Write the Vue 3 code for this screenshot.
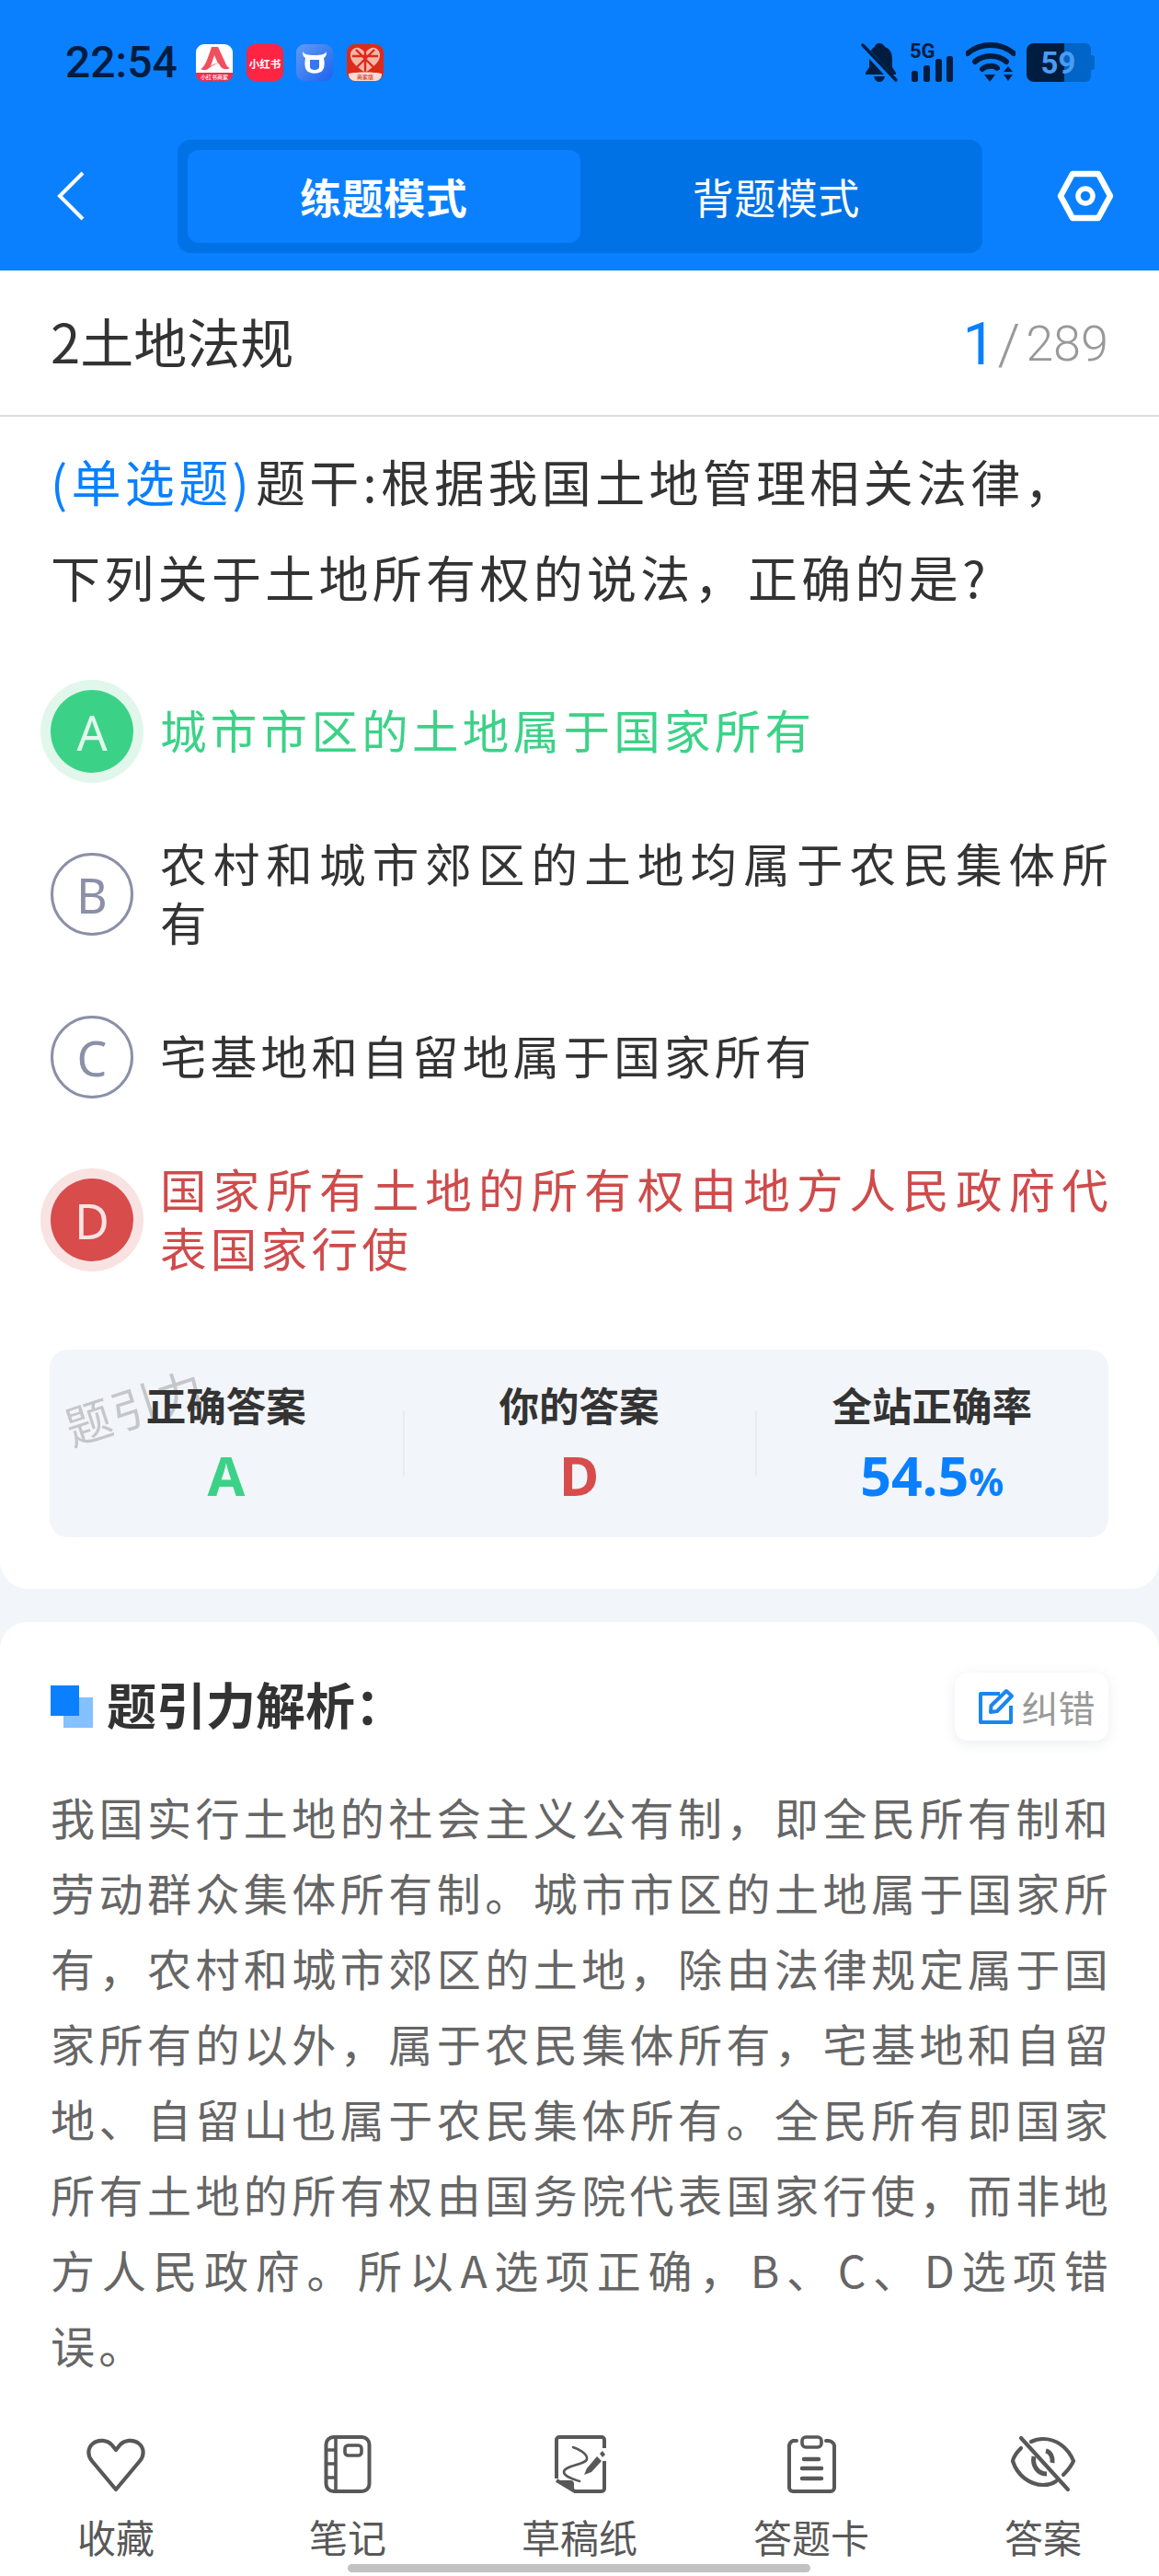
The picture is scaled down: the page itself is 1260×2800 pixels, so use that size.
<script setup>
const options = [
  { key: 'A', text: '城市市区的土地属于国家所有', state: 'right' },
  { key: 'B', text: '农村和城市郊区的土地均属于农民集体所有', state: '' },
  { key: 'C', text: '宅基地和自留地属于国家所有', state: '' },
  { key: 'D', text: '国家所有土地的所有权由地方人民政府代表国家行使', state: 'wrong' }
]
const analysis = '我国实行土地的社会主义公有制，即全民所有制和劳动群众集体所有制。城市市区的土地属于国家所有，农村和城市郊区的土地，除由法律规定属于国家所有的以外，属于农民集体所有，宅基地和自留地、自留山也属于农民集体所有。全民所有即国家所有土地的所有权由国务院代表国家行使，而非地方人民政府。所以A选项正确，B、C、D选项错误。'
</script>

<template>
  <div class="page">
    <header class="top">
      <div class="status">
        <span class="time">22:54</span>
        <div class="apps">
          <svg class="app" viewBox="0 0 40 40">
            <rect width="40" height="40" rx="9" fill="#fff" />
            <path d="M0 31H40V33A7 7 0 0 1 33 40H7A7 7 0 0 1 0 33Z" fill="#e8304e" />
            <path d="M5 27C10 25 13 15 17 3H24L31 18C33 23 34 25 37 26C31 29 27 26 25 21C21 21 17 24 13 27C10 29 7 28 5 27Z" fill="#f0505c" />
            <path d="M20 12L24 21C21 21 18 22 16 24Z" fill="#fff" />
            <text x="20" y="38" class="app-tiny" fill="#fff">小红书商家</text>
          </svg>
          <svg class="app" viewBox="0 0 40 40">
            <rect width="40" height="40" rx="9" fill="#ff2442" />
            <text x="20" y="25.500" class="app-red" fill="#fff">小红书</text>
          </svg>
          <svg class="app" viewBox="0 0 40 40">
            <defs>
              <linearGradient id="cowBg" x1="0" y1="0" x2="1" y2="1">
                <stop offset="0" stop-color="#5f9cf5" />
                <stop offset="1" stop-color="#1f62ee" />
              </linearGradient>
            </defs>
            <rect width="40" height="40" rx="9" fill="url(#cowBg)" />
            <path d="M7 8C7 12 8 14 10 15C9 20 9 25 11 28C14 33 26 33 29 28C31 25 31 20 30 15C32 14 33 12 33 8C31 11 28 12 20 12C12 12 9 11 7 8Z" fill="#fff" />
            <path d="M15 17H25V25C25 29 15 29 15 25Z" fill="#3478f0" />
          </svg>
          <svg class="app" viewBox="0 0 40 40">
            <rect width="40" height="40" rx="9" fill="#dd2a1a" />
            <path d="M20 31C10 24 4 19 4 12C4 6 9 3 13 4C16 5 18 7 20 9C22 7 24 5 27 4C31 3 36 6 36 12C36 19 30 24 20 31Z" fill="#f5b7a8" />
            <path d="M20 5V30M6 13H34M10 6L30 26M30 6L10 26" stroke="#dd2a1a" stroke-width="2.400" fill="none" />
            <path d="M2 32C10 30 30 30 38 32V33A7 7 0 0 1 31 40H9A7 7 0 0 1 2 33Z" fill="#fbdcd3" />
            <text x="20" y="38.400" class="app-tiny" fill="#d63a2a">商家版</text>
          </svg>
        </div>
        <div class="indicators">
          <svg class="ind bell" viewBox="0 0 40 44">
            <path d="M20 1C23 1 25 3 26 5C32 7 34 12 34 19V27L38 33V35H5V33L9 27V14L10 10C12 7 14 5 15 5C15 3 17 1 20 1Z" fill="#001c3f" />
            <path d="M14 37H26C25 41 23 43 20 43C17 43 15 41 14 37Z" fill="#001c3f" />
            <path d="M0 3L38 44" stroke="#0a80ff" stroke-width="7" />
            <path d="M2 3L38 41" stroke="#001c3f" stroke-width="3.400" stroke-linecap="round" />
          </svg>
          <svg class="ind signal" viewBox="0 -6 50 50">
            <text x="1" y="17" class="five-g" fill="#001c3f">5G</text>
            <rect x="3" y="31" width="7" height="12" rx="2.500" fill="#001c3f" />
            <rect x="16" y="25" width="7" height="18" rx="2.500" fill="#001c3f" />
            <rect x="29" y="18" width="7" height="25" rx="2.500" fill="#001c3f" />
            <rect x="41" y="15" width="7" height="28" rx="2.500" fill="#001c3f" />
          </svg>
          <svg class="ind wifi" viewBox="0 0 54 44">
            <path d="M2 12C16 0 38 0 52 12" fill="none" stroke="#001c3f" stroke-width="6" stroke-linecap="round" />
            <path d="M10 21C19 13 35 13 44 21" fill="none" stroke="#001c3f" stroke-width="6" stroke-linecap="round" />
            <path d="M18 29C22 25 31 25 34 28" fill="none" stroke="#001c3f" stroke-width="6" stroke-linecap="round" />
            <path d="M20 35H32L26 43Z" fill="#001c3f" />
            <path d="M41 32H51L46 26Z M41 35H51L46 42Z" fill="#001c3f" />
          </svg>
          <svg class="ind battery" viewBox="0 0 74 42">
            <path d="M41 0H64A6 6 0 0 1 70 6V36A6 6 0 0 1 64 42H41Z" fill="#0065c6" />
            <path d="M70 13H71A3 3 0 0 1 74 16V26A3 3 0 0 1 71 29H70Z" fill="#0065c6" />
            <path d="M41 0H8A8 8 0 0 0 0 8V34A8 8 0 0 0 8 42H41Z" fill="#001c3f" />
            <text x="15.500" y="33" class="batt" fill="#4a9cf2">59</text>
          </svg>
        </div>
      </div>

      <nav class="nav">
        <svg class="back" viewBox="0 0 30 54">
          <path d="M28 2L3 27L28 52" fill="none" stroke="#fff" stroke-width="4" />
        </svg>
        <div class="tabs">
          <span class="tab on">练题模式</span>
          <span class="tab">背题模式</span>
        </div>
        <svg class="gear" viewBox="0 0 62 56">
          <path d="M17 4H45L58 28L45 52H17L4 28Z" fill="none" stroke="#fff" stroke-width="6.500" stroke-linejoin="round" />
          <circle cx="31" cy="28" r="8" fill="none" stroke="#fff" stroke-width="5.500" />
        </svg>
      </nav>
    </header>

    <main class="body">
      <section class="card first">
        <div class="head">
          <span class="chapter">2土地法规</span>
          <span class="count"><b>1</b><i>/</i>289</span>
        </div>
        <div class="question"><span class="qtype">(单选题)</span>题干:根据我国土地管理相关法律，下列关于土地所有权的说法，正确的是?</div>
        <ul class="options">
          <li v-for="o in options" :key="o.key" class="option" :class="o.state">
            <span class="mark">{{ o.key }}</span>
            <span class="otext">{{ o.text }}</span>
          </li>
        </ul>
        <div class="stats">
          <span class="watermark">题引力</span>
          <div class="stat">
            <span class="slabel">正确答案</span>
            <span class="sval green">A</span>
          </div>
          <div class="stat">
            <span class="slabel">你的答案</span>
            <span class="sval red">D</span>
          </div>
          <div class="stat">
            <span class="slabel">全站正确率</span>
            <span class="sval blue">54.5<small>%</small></span>
          </div>
        </div>
      </section>

      <section class="card second">
        <div class="ahead">
          <span class="squares"><i class="s2"></i><i class="s1"></i></span>
          <h2 class="atitle">题引力解析：</h2>
          <span class="fix">
            <svg class="fix-ico" viewBox="0 0 40 40">
              <path d="M24 6H3V37H36V19" fill="none" stroke="#1a86ee" stroke-width="4" stroke-linejoin="round" />
              <path d="M14 26L14.500 19L31 3L37 8.500L21 25Z" fill="none" stroke="#1a86ee" stroke-width="4" stroke-linejoin="round" />
            </svg>
            纠错
          </span>
        </div>
        <p class="analysis">{{ analysis }}</p>
      </section>
    </main>

    <footer class="tools">
      <div class="tool">
        <svg class="tico" viewBox="0 0 72 64">
          <path d="M36 59L10 28C5 22 5 14 11 9C17 4 27 5 32 11L36 16L40 11C45 5 55 4 61 9C67 14 67 22 62 28Z" fill="none" stroke="#585858" stroke-width="4.200" stroke-linejoin="round" />
        </svg>
        <span>收藏</span>
      </div>
      <div class="tool">
        <svg class="tico" viewBox="0 0 72 64">
          <rect x="12.500" y="2" width="47" height="59" rx="8" fill="none" stroke="#585858" stroke-width="4" />
          <path d="M23 2V61M12 16H23M12 31H23M12 46H23" fill="none" stroke="#585858" stroke-width="3.600" />
          <rect x="33" y="11" width="18" height="11" rx="3.500" fill="none" stroke="#585858" stroke-width="3.600" />
        </svg>
        <span>笔记</span>
      </div>
      <div class="tool">
        <svg class="tico" viewBox="0 0 72 64">
          <path d="M11 47V5A3 3 0 0 1 14 2H60A3 3 0 0 1 63 5V14M63 28V58A3 3 0 0 1 60 61H31L11 49" fill="none" stroke="#585858" stroke-width="4" stroke-linejoin="round" />
          <path d="M11 49H26A4 4 0 0 1 30 53V61Z" fill="#585858" />
          <path d="M29 13C35 15 45 20 44 26C43 32 19 33 19 40C19 45 30 48 36 50" fill="none" stroke="#585858" stroke-width="2.600" stroke-linecap="round" />
          <path d="M41 43L44 36L55 23L60 28L49 40Z" fill="#585858" />
          <path d="M58 20L61 17L64 21L61 24Z" fill="#585858" />
        </svg>
        <span>草稿纸</span>
      </div>
      <div class="tool">
        <svg class="tico" viewBox="0 0 72 64">
          <path d="M20 6H16A7 7 0 0 0 12 11V57A4 4 0 0 0 16 61H57A4 4 0 0 0 61 57V11A7 7 0 0 0 54 6H52" fill="none" stroke="#585858" stroke-width="4" stroke-linecap="round" />
          <rect x="26" y="2" width="21" height="11" rx="4" fill="none" stroke="#585858" stroke-width="3.600" />
          <path d="M28 26H44M26 36H47M26 47H47" fill="none" stroke="#585858" stroke-width="4.500" stroke-linecap="round" />
        </svg>
        <span>答题卡</span>
      </div>
      <div class="tool">
        <svg class="tico" viewBox="0 0 72 64">
          <path d="M12 14C7 19 4 23 3 28C8 44 22 54 36 54C41 54 46 53 50 50M58 43C63 38 67 33 69 28C63 13 50 4 36 4C31 4 27 5 23 7" fill="none" stroke="#585858" stroke-width="4.200" stroke-linecap="round" />
          <path d="M26 23C24 33 30 42 40 42M39 17C44 18 47 24 46 30" fill="none" stroke="#585858" stroke-width="5" />
          <path d="M12 3L63 59" stroke="#585858" stroke-width="4.200" stroke-linecap="round" />
        </svg>
        <span>答案</span>
      </div>
      <i class="home"></i>
    </footer>
  </div>
</template>

<style>
html, body { margin: 0; padding: 0; }
</style>

<style scoped>
.page {
  position: relative;
  width: 1260px;
  height: 2800px;
  overflow: hidden;
  display: flex;
  flex-direction: column;
  background: #f2f5f9;
  font-family: "Noto Sans CJK SC", "Noto Sans", sans-serif;
  color: #333;
}
.top {
  height: 294px;
  box-sizing: border-box;
  background: #0a80ff;
  flex: none;
}
.status {
  height: 152px;
  box-sizing: border-box;
  padding: 46px 70px 0 71px;
  display: flex;
  align-items: flex-start;
}
.time {
  font-family: Roboto, sans-serif;
  font-weight: 500;
  font-size: 48px;
  line-height: 44px;
  color: #001c3f;
  width: 142px;
}
.apps {
  display: flex;
  gap: 14.500px;
  margin-top: 2px;
}
.app {
  width: 40px;
  height: 40px;
  display: block;
}
.app-tiny { font-size: 6px; text-anchor: middle; font-weight: 500; }
.app-red { font-size: 11.500px; text-anchor: middle; font-weight: 700; }
.indicators {
  margin-left: auto;
  display: flex;
  align-items: flex-start;
  gap: 12px;
}
.ind { display: block; height: 44px; }
.bell { width: 40px; }
.signal { width: 50px; height: 50px; margin-top: -6px; }
.wifi { width: 54px; }
.battery { width: 74px; height: 42px; margin-top: 1px; }
.five-g { font-family: Roboto, sans-serif; font-size: 22px; font-weight: 700; }
.batt { font-family: Roboto, sans-serif; font-size: 33px; font-weight: 700; }

.nav {
  display: flex;
  align-items: flex-start;
  padding-left: 62px;
}
.back { width: 30px; height: 54px; margin-top: 34px; }
.tabs {
  margin-left: 101px;
  width: 875px;
  height: 123px;
  box-sizing: border-box;
  padding: 11px;
  border-radius: 14px;
  background: #0072e6;
  display: flex;
}
.tab {
  flex: 1;
  border-radius: 12px;
  display: flex;
  align-items: center;
  justify-content: center;
  font-size: 45px;
  color: #fff;
  letter-spacing: 0.500px;
}
.tab.on {
  background: #0a80ff;
  font-weight: 700;
}
.gear { width: 62px; height: 56px; margin-left: 81px; margin-top: 33px; }

.body { flex: 1; min-height: 0; overflow: hidden; }
.card { background: #fff; }
.first {
  height: 1433px;
  box-sizing: border-box;
  border-radius: 0 0 30px 30px;
}
.head {
  height: 159px;
  box-sizing: border-box;
  border-bottom: 2px solid #dcdcdc;
  padding: 0 55px 6px 55px;
  display: flex;
  align-items: center;
  justify-content: space-between;
}
.chapter { font-size: 58px; line-height: 80px; color: #333; }
.count {
  margin-top: 9px;
  font-family: Roboto, "Noto Sans", sans-serif;
  font-size: 54px;
  font-weight: 300;
  line-height: 80px;
  color: #999;
}
.count b {
  font-weight: 400;
  font-size: 64px;
  line-height: 1;
  color: #0a80ff;
  vertical-align: -4px;
}
.count i {
  font-style: normal;
  font-size: 62px;
  line-height: 1;
  margin: 0 6px 0 2px;
  vertical-align: -4px;
}
.question {
  margin-top: 18px;
  padding: 0 55px;
  font-size: 54px;
  line-height: 104px;
  letter-spacing: 4.300px;
  color: #333;
}
.qtype { color: #0a80ff; margin-right: 3px; }
.options {
  list-style: none;
  margin: 71px 0 0;
  padding: 0 51px 0 55px;
  display: flex;
  flex-direction: column;
  gap: 68px;
}
.option {
  display: flex;
  align-items: center;
  min-height: 90px;
  color: #333;
}
.mark {
  flex: none;
  width: 90px;
  height: 90px;
  box-sizing: border-box;
  border: 3px solid #8b90a8;
  border-radius: 50%;
  color: #8b90a8;
  display: flex;
  align-items: center;
  justify-content: center;
  font-family: "Noto Sans", sans-serif;
  font-size: 52px;
}
.otext {
  flex: 1;
  margin-left: 29px;
  font-size: 50.500px;
  line-height: 64px;
  letter-spacing: 4.300px;
  text-align: justify;
  transform: translateY(-3px);
}
.option.right { color: #3bd287; }
.option.right .mark {
  background: #3bd287;
  border: 0;
  color: #e2f8ec;
  box-shadow: 0 0 0 11px #e1f7eb;
}
.option.wrong { color: #cf4b4b; }
.option.wrong .mark {
  background: #d84c4c;
  border: 0;
  color: #fae3e3;
  box-shadow: 0 0 0 11px #f9e2e2;
}
.stats {
  position: relative;
  margin: 77px 55px 0 54px;
  height: 204px;
  box-sizing: border-box;
  padding-top: 30px;
  border-radius: 20px;
  background: #f2f5f9;
  display: flex;
  align-items: flex-start;
}
.watermark {
  position: absolute;
  left: 14px;
  top: 30px;
  font-size: 50px;
  line-height: 60px;
  letter-spacing: 2px;
  color: #c4c6ca;
  transform: rotate(-18deg);
}
.stat {
  position: relative;
  flex: 1;
  display: flex;
  flex-direction: column;
  align-items: center;
}
.stat + .stat::before {
  content: "";
  position: absolute;
  left: 0;
  top: 36px;
  height: 72px;
  width: 2px;
  background: #e9ecf0;
}
.slabel {
  font-size: 43.500px;
  line-height: 60px;
  font-weight: 700;
  color: #333;
}
.sval {
  font-family: "Noto Sans", sans-serif;
  font-size: 59px;
  line-height: 70px;
  margin-top: 11px;
  font-weight: 700;
}
.sval small { font-size: 42px; }
.green { color: #3bd287; }
.red { color: #d84c4c; }
.blue { color: #0a80ff; }

.second {
  margin-top: 36px;
  height: 860px;
  box-sizing: border-box;
  padding: 55px 51px 0 55px;
  border-radius: 30px 30px 0 0;
}
.ahead {
  display: flex;
  align-items: center;
  height: 74px;
  margin-right: 4px;
}
.squares { position: relative; width: 46px; height: 46px; flex: none; }
.squares i { position: absolute; display: block; }
.s2 { left: 14px; top: 13px; width: 32px; height: 33px; background: #85c0ff; }
.s1 { left: 0; top: 0; width: 31px; height: 33px; background: #0a80ff; }
.atitle {
  margin: 0 0 6px 15px;
  font-size: 54px;
  line-height: 68px;
  font-weight: 700;
  color: #333;
  white-space: nowrap;
}
.fix {
  margin-left: auto;
  height: 74px;
  width: 167px;
  box-sizing: border-box;
  padding-left: 10px;
  border-radius: 14px;
  background: #fff;
  box-shadow: 0 3px 14px rgba(60, 80, 110, 0.1);
  display: flex;
  align-items: center;
  justify-content: center;
  gap: 8px;
  font-size: 40px;
  color: #999;
}
.fix-ico { width: 40px; height: 40px; }
.analysis {
  margin: 41px 0 0;
  font-size: 48px;
  line-height: 82px;
  letter-spacing: 4.200px;
  color: #666;
  text-align: justify;
}

.tools {
  position: relative;
  flex: none;
  height: 180px;
  box-sizing: border-box;
  background: #fff;
  padding-top: 27px;
  display: flex;
}
.tool {
  flex: 1;
  display: flex;
  flex-direction: column;
  align-items: center;
  color: #585858;
  font-size: 42px;
  line-height: 56px;
}
.tico { width: 72px; height: 64px; display: block; margin-bottom: 18px; }
.home {
  position: absolute;
  left: 378px;
  top: 167px;
  width: 503px;
  height: 9px;
  border-radius: 5px;
  background: #c2c2c2;
}
</style>
